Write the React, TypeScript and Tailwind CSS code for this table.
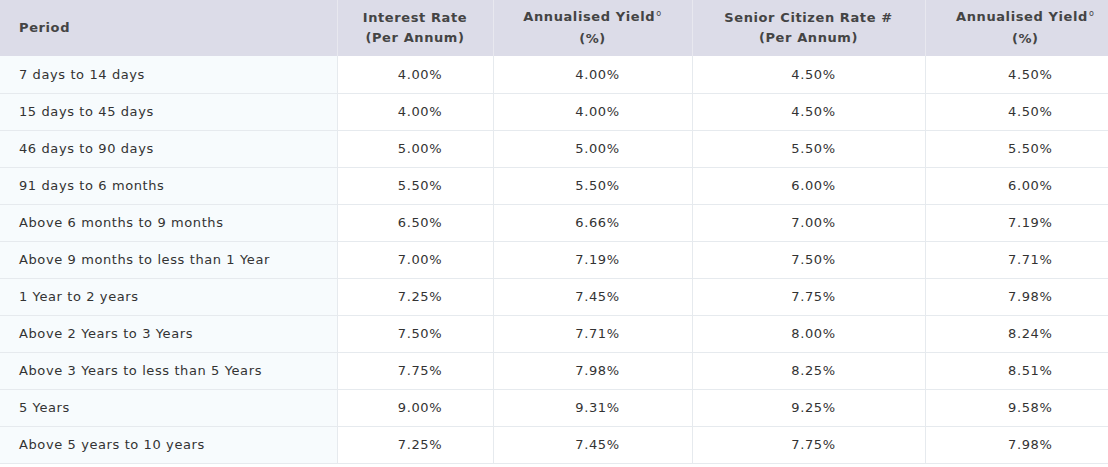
const rows: [string, string, string, string, string][] = [
  ["7 days to 14 days", "4.00%", "4.00%", "4.50%", "4.50%"],
  ["15 days to 45 days", "4.00%", "4.00%", "4.50%", "4.50%"],
  ["46 days to 90 days", "5.00%", "5.00%", "5.50%", "5.50%"],
  ["91 days to 6 months", "5.50%", "5.50%", "6.00%", "6.00%"],
  ["Above 6 months to 9 months", "6.50%", "6.66%", "7.00%", "7.19%"],
  ["Above 9 months to less than 1 Year", "7.00%", "7.19%", "7.50%", "7.71%"],
  ["1 Year to 2 years", "7.25%", "7.45%", "7.75%", "7.98%"],
  ["Above 2 Years to 3 Years", "7.50%", "7.71%", "8.00%", "8.24%"],
  ["Above 3 Years to less than 5 Years", "7.75%", "7.98%", "8.25%", "8.51%"],
  ["5 Years", "9.00%", "9.31%", "9.25%", "9.58%"],
  ["Above 5 years to 10 years", "7.25%", "7.45%", "7.75%", "7.98%"],
];

const headers: { top: string; sup?: boolean; bottom: string }[] = [
  { top: "Interest Rate", bottom: "(Per Annum)" },
  { top: "Annualised Yield", sup: true, bottom: "(%)" },
  { top: "Senior Citizen Rate #", bottom: "(Per Annum)" },
  { top: "Annualised Yield", sup: true, bottom: "(%)" },
];

export default function App() {
  return (
    <div className="w-[1108px] h-[467px] overflow-hidden bg-white font-['DejaVu_Sans',Verdana,sans-serif] text-[13px] tracking-[0.6px] text-[#333]">
      {/* table runs a little past the right edge, like the source page */}
      <table className="w-[1125px] table-fixed border-collapse">
        <colgroup>
          <col className="w-[337px]" />
          <col className="w-[156px]" />
          <col className="w-[199px]" />
          <col className="w-[233px]" />
          <col className="w-[200px]" />
        </colgroup>
        <thead>
          <tr className="h-[56px] bg-[#dcdce8] text-[#444]">
            <th className="pl-[19px] text-left font-bold border-r border-[#e8e8ef]">Period</th>
            {headers.map((h, i) => (
              <th key={i} className="text-center font-bold leading-[20px] border-r border-[#e8e8ef] last:border-r-0">
                {h.top}
                {h.sup && <span className="relative -top-[5px] ml-[1px] text-[8px] font-normal">o</span>}
                <br />
                {h.bottom}
              </th>
            ))}
          </tr>
        </thead>
        <tbody>
          {rows.map((r) => (
            <tr key={r[0]} className="h-[37px] border-b border-[#e6eaee]">
              <td className="pl-[19px] bg-[#f7fbfd] border-r border-[#e6eaee]">{r[0]}</td>
              {r.slice(1).map((v, i) => (
                <td key={i} className="pl-[10px] text-center border-r border-[#e6eaee] last:border-r-0">
                  {v}
                </td>
              ))}
            </tr>
          ))}
        </tbody>
      </table>
    </div>
  );
}
